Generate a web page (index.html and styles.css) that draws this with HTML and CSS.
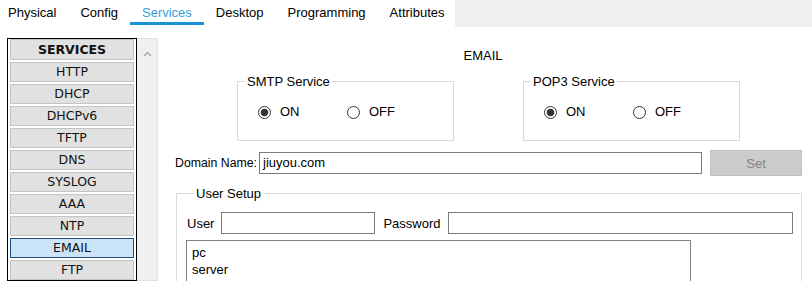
FILE: index.html
```html
<!DOCTYPE html>
<html lang="en">
<head>
  <meta charset="UTF-8" />
  <title>Server - Services</title>
  <link rel="stylesheet" href="styles.css">
</head>
<body>
  <!-- Top tabs -->
  <div class="tabs">
    <div class="tabs__list">
      <span class="tab">Physical</span>
      <span class="tab">Config</span>
      <span class="tab tab--active">Services</span>
      <span class="tab">Desktop</span>
      <span class="tab">Programming</span>
      <span class="tab">Attributes</span>
    </div>
    <div class="tabs__rest"></div>
  </div>

  <div class="content">
    <!-- Services list -->
    <aside class="sidebar">
      <div class="services">
        <div class="services__item services__item--head">SERVICES</div>
        <div class="services__item">HTTP</div>
        <div class="services__item">DHCP</div>
        <div class="services__item">DHCPv6</div>
        <div class="services__item">TFTP</div>
        <div class="services__item">DNS</div>
        <div class="services__item">SYSLOG</div>
        <div class="services__item">AAA</div>
        <div class="services__item">NTP</div>
        <div class="services__item services__item--active">EMAIL</div>
        <div class="services__item">FTP</div>
      </div>
      <div class="scrollbar">
        <svg width="9" height="6" viewBox="0 0 9 6"><polyline points="1,5 4.5,1.5 8,5" fill="none" stroke="#a6a6a6" stroke-width="1.3"/></svg>
      </div>
    </aside>

    <!-- Email panel -->
    <main class="panel">
      <div class="panel__title">EMAIL</div>

      <div class="panel__groups">
        <fieldset class="group group--small">
          <legend>SMTP Service</legend>
          <div class="radios">
            <label class="radio"><span class="radio__dot radio__dot--on"></span>ON</label>
            <label class="radio"><span class="radio__dot"></span>OFF</label>
          </div>
        </fieldset>
        <fieldset class="group group--small">
          <legend>POP3 Service</legend>
          <div class="radios">
            <label class="radio"><span class="radio__dot radio__dot--on"></span>ON</label>
            <label class="radio"><span class="radio__dot"></span>OFF</label>
          </div>
        </fieldset>
      </div>

      <div class="domain">
        <label class="domain__label">Domain Name:</label>
        <div class="input domain__input">jiuyou.com</div>
        <button class="domain__set">Set</button>
      </div>

      <fieldset class="group group--users">
        <legend>User Setup</legend>
        <div class="users__row">
          <label class="users__label">User</label>
          <div class="input users__user"></div>
          <label class="users__label users__label--pass">Password</label>
          <div class="input users__pass"></div>
        </div>
        <div class="users__list">
          <div>pc</div>
          <div>server</div>
        </div>
      </fieldset>
    </main>
  </div>
</body>
</html>
```

FILE: styles.css
```css
/* Page */
body {
  margin: 0;
  width: 812px;
  height: 281px;
  overflow: hidden;
  font-family: "Liberation Sans", Arial, sans-serif;
  font-size: 13px;
  color: #000;
  background: #fff;
}
/* Tabs */
.tabs {
  display: flex;
  height: 27px;
}
.tabs__list {
  display: flex;
  width: 455px;
}
.tab {
  padding: 5px 12px 0;
  height: 17px;
  line-height: 16px;
  border-bottom: 3px solid transparent;
}
.tab:first-child {
  padding-left: 8px;
}
.tab--active {
  color: #3a9bd9;
  border-bottom-color: #1893d3;
}
.tabs__rest {
  flex: 1;
  background: #f0f0f0;
}
/* Main area */
.content {
  display: flex;
  height: 254px;
  overflow: hidden;
}
/* Sidebar */
.sidebar {
  display: flex;
  padding: 11px 0 0 7px;
}
.services {
  width: 130px;
  box-sizing: border-box;
  border: 1px solid #000;
  padding: 0 2px;
  display: flex;
  flex-direction: column;
  gap: 2px;
  font-family: "DejaVu Sans", Tahoma, sans-serif;
  font-size: 12.5px;
  color: #111;
  overflow: hidden;
}
.services__item {
  flex: none;
  height: 20px;
  box-sizing: border-box;
  border: 1px solid #c4c4c4;
  background: #e1e1e1;
  line-height: 18px;
  text-align: center;
}
.services__item--head {
  height: 21px;
  font-weight: bold;
  line-height: 19px;
}
.services__item--active {
  background: #cce4f7;
  border-color: #1f4f7f;
}
.scrollbar {
  width: 21px;
  box-sizing: border-box;
  background: #f0f0f0;
  border: 1px solid #e2e2e2;
  border-left: none;
  text-align: center;
  padding-top: 6px;
}
/* Panel */
.panel {
  flex: 1;
  padding: 21px 9px 0 17px;
}
.panel__title {
  line-height: 16px;
  text-align: center;
  margin-right: 12px;
}
.panel__groups {
  display: flex;
  gap: 69px;
  margin: 10px 0 0 62px;
}
.group {
  margin: 0;
  padding: 0;
  border: 1px solid #dadada;
  min-width: 0;
}
.group legend {
  margin-left: 7px;
  padding: 0 2px;
  line-height: 15px;
}
.group--small {
  width: 217px;
  height: 67px;
  box-sizing: border-box;
}
/* Radios */
.radios {
  display: flex;
  margin: 15px 0 0 20px;
}
.radio {
  display: flex;
  align-items: center;
  gap: 9px;
  line-height: 16px;
}
.radio:first-child {
  width: 89px;
}
.radio__dot {
  width: 13px;
  height: 13px;
  box-sizing: border-box;
  border: 1px solid #333;
  border-radius: 50%;
  background: #fff;
}
.radio__dot--on {
  background: radial-gradient(circle, #333 0 3.4px, #fff 4.2px);
}
/* Domain */
.domain {
  display: flex;
  align-items: center;
  height: 26px;
  margin-top: 9px;
}
.domain__label {
  flex: none;
  width: 84px;
  font-size: 12.3px;
  white-space: nowrap;
}
.input {
  flex: none;
  height: 22px;
  box-sizing: border-box;
  border: 1px solid #7a7a7a;
  padding-left: 3px;
  line-height: 20px;
}
.domain__input {
  width: 443px;
}
.domain__set {
  flex: none;
  margin-left: 8px;
  width: 92px;
  height: 26px;
  border: 1px solid #bfbfbf;
  background: #cccccc;
  color: #838383;
  font-family: inherit;
  font-size: 13px;
}
/* User setup */
.group--users {
  margin: 10px 1px 0 1px;
  padding: 0 8px 0 10px;
  height: 100px;
}
.users__row {
  display: flex;
  align-items: center;
  margin-top: 11px;
}
.users__label {
  margin-right: 7px;
}
.users__label--pass {
  margin-left: 8px;
}
.users__user {
  width: 154px;
}
.users__pass {
  flex: 1;
}
.users__list {
  width: 505px;
  height: 50px;
  box-sizing: border-box;
  margin: 6px 0 0 -1px;
  border: 1px solid #828282;
  padding: 3px 5px;
  line-height: 17px;
}
```
